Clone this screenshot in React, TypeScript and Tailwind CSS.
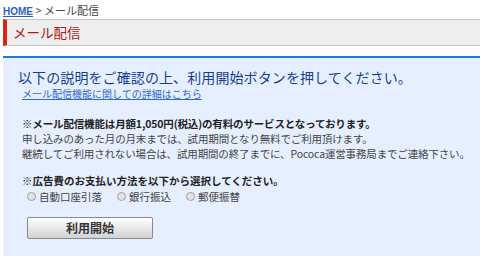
export default function App() {
  return (
    <div className="w-[480px] h-[258px] overflow-hidden bg-white text-[#333] font-['Noto_Sans_CJK_JP',sans-serif]">
      {/* breadcrumb */}
      <div className="h-[19px] pl-[3px] pt-[3px] text-[11px] leading-[14px] text-[#444]">
        <a href="#" className="font-bold text-[10px] text-[#2f5cc4] underline font-['Liberation_Sans',sans-serif]">
          HOME
        </a>
        <span> &gt; メール配信</span>
      </div>

      {/* page title */}
      <div className="ml-[3px] h-[27px] flex items-center border-y border-[#c4c4c4] border-l-4 border-l-[#d42a10] bg-[#eeeeee] pl-[6px]">
        <h1 className="text-[13.5px] leading-none text-[#b01818]">メール配信</h1>
      </div>

      {/* main box */}
      <div className="ml-[3px] mt-[10px] h-[200px] border-t-2 border-[#2a78d6] bg-[#e6efff] pl-[15px]">
        <p className="mt-[10px] text-[14px] leading-[18px] tracking-[0.1px] text-[#163f8f] whitespace-nowrap">
          以下の説明をご確認の上、利用開始ボタンを押してください。
        </p>
        <a href="#" className="block ml-[4px] mt-[1px] text-[10px] leading-[13px] text-[#3366cc] underline">
          メール配信機能に関しての詳細はこちら
        </a>

        <div className="ml-[4px] mt-[16px] text-[10.5px] leading-[15px] tracking-[-0.15px] text-[#444] whitespace-nowrap">
          <p className="font-bold text-[#222]">※メール配信機能は月額1,050円(税込)の有料のサービスとなっております。</p>
          <p>申し込みのあった月の月末までは、試用期間となり無料でご利用頂けます。</p>
          <p>継続してご利用されない場合は、試用期間の終了までに、Pococa運営事務局までご連絡下さい。</p>
        </div>

        <div className="ml-[4px] mt-[12px] text-[10.5px] leading-[15px] text-[#444]">
          <p className="font-bold text-[#222]">※広告費のお支払い方法を以下から選択してください。</p>
          <div className="flex items-center gap-[15px] ml-[5px] mt-[1px]">
            {["自動口座引落", "銀行振込", "郵便振替"].map((label) => (
              <label key={label} className="flex items-center gap-[3px]">
                <span className="w-[9px] h-[9px] rounded-full border border-[#a0a0a0] bg-[#e2e2e2]" />
                <span>{label}</span>
              </label>
            ))}
          </div>
        </div>

        <button className="ml-[9px] mt-[13px] w-[126px] h-[22px] rounded-[2px] border border-[#8a8a8a] bg-linear-to-b from-white to-[#d2d2d2] text-[12px] font-bold leading-none text-[#333]">
          利用開始
        </button>
      </div>
    </div>
  );
}
